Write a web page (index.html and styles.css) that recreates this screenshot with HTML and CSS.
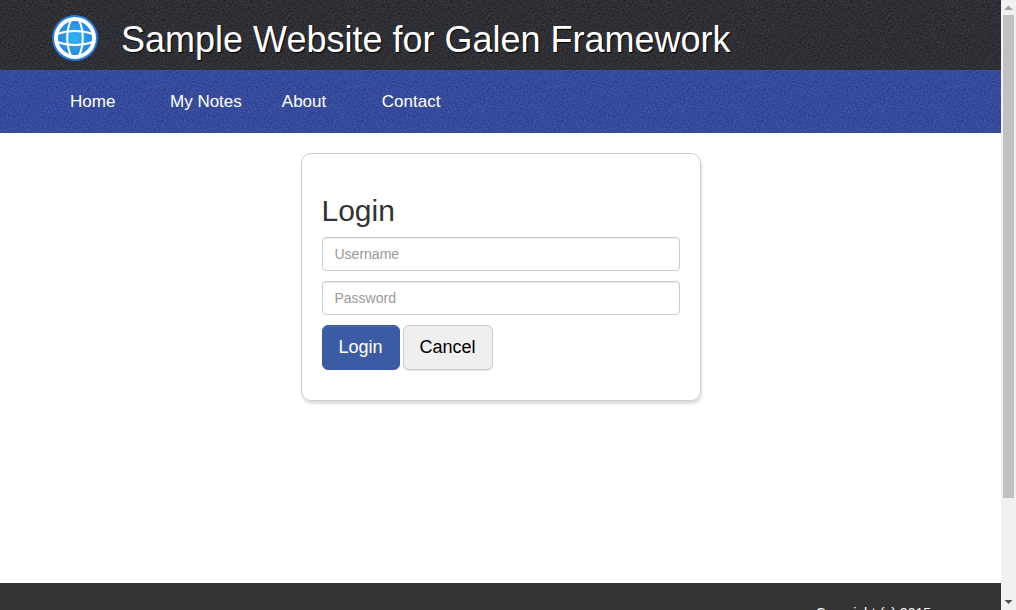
FILE: index.html
```html
<!DOCTYPE html>
<html lang="en">
<head>
<meta charset="utf-8">
<title>Sample Website for Galen Framework</title>
<link rel="stylesheet" href="styles.css">
</head>
<body>
<div class="viewport">
  <div class="page">
    <header class="header">
      <svg class="logo" viewBox="0 0 48 48" aria-hidden="true">
        <defs>
          <radialGradient id="globe">
            <stop offset="0" stop-color="#31b5f5"/>
            <stop offset="1" stop-color="#2478d8"/>
          </radialGradient>
        </defs>
        <circle cx="24" cy="24" r="23" fill="url(#globe)"/>
        <g fill="none" stroke="#fff">
          <circle cx="24" cy="24" r="19" stroke-width="4"/>
          <g stroke-width="2">
            <path d="M20 6C15 17 15 31 20 42M28 6C33 17 33 31 28 42"/>
            <path d="M6 20C17 16 31 16 42 20M6 28C17 32 31 32 42 28"/>
          </g>
        </g>
      </svg>
      <h1 class="title">Sample Website for Galen Framework</h1>
    </header>
    <nav class="menu">
      <a class="menu-item" href="#">Home</a>
      <a class="menu-item" href="#">My Notes</a>
      <a class="menu-item" href="#">About</a>
      <a class="menu-item" href="#">Contact</a>
    </nav>
    <main class="content">
      <form class="login">
        <h2 class="login-title">Login</h2>
        <input class="field" type="text" placeholder="Username" aria-label="Username">
        <input class="field" type="password" placeholder="Password" aria-label="Password">
        <div class="actions">
          <button class="button button-primary" type="button">Login</button>
          <button class="button" type="button">Cancel</button>
        </div>
      </form>
    </main>
    <footer class="footer">Copyright (c) 2015</footer>
  </div>
  <div class="scrollbar" aria-hidden="true">
    <svg class="arrow" viewBox="0 0 15 15"><path d="M3 10L7.500 5.500L12 10Z" fill="#a3a3a3"/></svg>
    <div class="track"><div class="thumb"></div></div>
    <svg class="arrow" viewBox="0 0 15 15"><path d="M3.500 5L7.500 9L11.500 5Z" fill="#505050"/></svg>
  </div>
</div>
</body>
</html>
```

FILE: styles.css
```css
* {
  box-sizing: border-box;
}

body {
  margin: 0;
  background: #fff;
  color: #333;
  font: 14px/20px "Liberation Sans", Arial, sans-serif;
}

.viewport {
  display: flex;
  height: 100vh;
  overflow: hidden;
}

.page {
  display: flex;
  flex: 1;
  flex-direction: column;
  min-width: 0;
}

.header,
.menu {
  background-image: url("data:image/svg+xml,%3Csvg xmlns='http://www.w3.org/2000/svg' width='200' height='200'%3E%3Cfilter id='n' x='0' y='0' width='1' height='1' color-interpolation-filters='sRGB'%3E%3CfeTurbulence type='fractalNoise' baseFrequency='.7' numOctaves='2' stitchTiles='stitch'/%3E%3CfeColorMatrix values='2 0 0 0 -.5 2 0 0 0 -.5 2 0 0 0 -.5 0 0 0 0 .1'/%3E%3C/filter%3E%3Crect width='200' height='200' filter='url(%23n)'/%3E%3C/svg%3E");
}

.header {
  display: flex;
  flex: none;
  align-items: center;
  gap: 22px;
  min-height: 70px;
  padding: 6px 51px 0;
  background-color: #26272d;
}

.logo {
  flex: none;
  width: 48px;
  height: 48px;
}

.title {
  margin: 0;
  padding-top: 4px;
  color: #fff;
  font-size: 36px;
  font-weight: 400;
  line-height: 40px;
  text-shadow: 1px 1px 1px #000;
}

.menu {
  display: flex;
  flex: none;
  padding: 0 50px;
  background-color: #2f459f;
}

.menu-item {
  min-width: 100px;
  padding: 20px;
  color: #fff;
  font-size: 17px;
  line-height: 23px;
  text-decoration: none;
}

.content {
  flex: none;
  min-height: 450px;
  padding: 20px;
}

.login {
  display: flex;
  flex-direction: column;
  gap: 10px;
  max-width: 400px;
  margin: 0 auto;
  padding: 40px 20px 30px;
  border: 1px solid #ccc;
  border-radius: 10px;
  box-shadow: 1px 3px 3px #ddd;
}

.login-title {
  margin: 0;
  font-size: 30px;
  font-weight: 400;
  line-height: 33px;
}

.field {
  width: 100%;
  height: 34px;
  padding: 6px 12px;
  border: 1px solid #ccc;
  border-radius: 4px;
  background: #fff;
  box-shadow: inset 0 1px 1px rgba(0, 0, 0, 0.075);
  color: #555;
  font: inherit;
}

.field::placeholder {
  color: #999;
  opacity: 1;
}

.actions {
  display: flex;
  gap: 3px;
}

.button {
  padding: 10px 16px;
  border: 1px solid #ccc;
  border-radius: 6px;
  background: #efefef;
  box-shadow: 0 1px 1px rgba(0, 0, 0, 0.1);
  color: #000;
  font: 18px/23px "Liberation Sans", Arial, sans-serif;
}

.button-primary {
  border-color: #3a5ba5;
  background: #3b5ca5;
  box-shadow: inset 0 1px 0 #4a6bb0;
  color: #fff;
}

.footer {
  flex: none;
  min-height: 150px;
  padding: 20px 70px;
  background: #333;
  color: #fff;
  text-align: right;
}

.scrollbar {
  display: flex;
  flex: none;
  flex-direction: column;
  width: 15px;
  background: #f1f1f1;
}

.arrow {
  flex: none;
  width: 15px;
  height: 15px;
}

.track {
  flex: 1;
  padding: 0 2px;
}

.thumb {
  height: 83.3%;
  background: #c1c1c1;
}
```
